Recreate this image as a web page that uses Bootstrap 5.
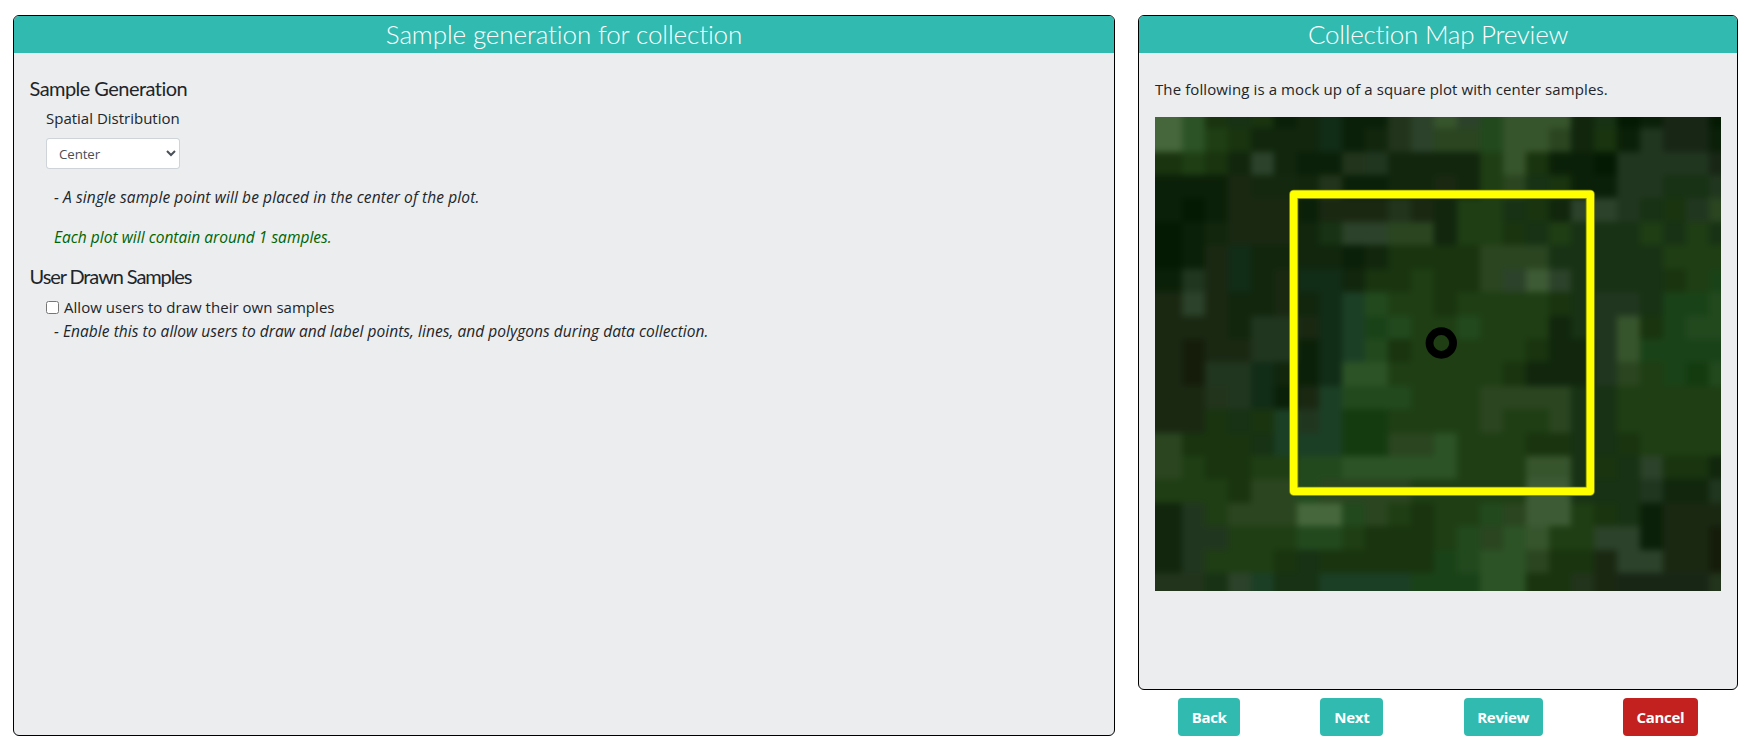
<!DOCTYPE html>
<html lang="en">
<head>
<meta charset="utf-8">
<meta name="viewport" content="width=device-width, initial-scale=1">
<title>Sample generation for collection</title>
<link href="https://cdn.jsdelivr.net/npm/bootstrap@5.3.0/dist/css/bootstrap.min.css" rel="stylesheet">
<style>
  body { font-family: "Open Sans", "Noto Sans", sans-serif; font-size: 15px; line-height: 24px; color: #212529; }
  .wizard { height: 749px; padding: 15px 13px 13px; gap: 23px; }
  .preview-col { width: 600px; }
  .panel { background: #ebedef; border: 1px solid #000; border-radius: 6px; overflow: hidden; }
  .panel-title { height: 37px; background: #31bab0; color: #fff; font: 300 26px/36px Lato, sans-serif; letter-spacing: -.12px; }
  .panel-title.tight { letter-spacing: -.25px; }
  .panel-content { padding: 24px 16px 0; }
  .section-title { font: 400 20px/24px Lato, sans-serif; letter-spacing: -.55px; margin: -1px 0 6px -.5px; }
  .section-title.tight { letter-spacing: -1.1px; margin-bottom: 7px; }
  .dist-select { width: 134px; height: 31px; appearance: auto; color: #495057; border-color: #ced4da; font-size: 13.3px; padding: 4px 8px; border-radius: 3px; letter-spacing: -.1px; }
  .hint { font-size: 15.5px; font-style: italic; letter-spacing: .08px; }
  .hint.roomy { letter-spacing: .11px; }
  .hint.snug { letter-spacing: .05px; }
  .estimate { color: #006400; letter-spacing: .02px; }
  .own-label { padding-left: 5px; letter-spacing: .03px; }
  .intro { letter-spacing: .1px; }
  .wizard-btn { height: 38px; padding: 0; border: 0; border-radius: 4px; background: #31bab0; color: #fff; font-size: 15px; font-weight: 700; letter-spacing: -.3px; }
  .wizard-btn.cancel { background: #c32020; }
</style>
</head>
<body class="bg-white overflow-hidden">
<main class="wizard d-flex">
  <section class="panel flex-grow-1">
    <h2 class="panel-title text-center mb-0">Sample generation for collection</h2>
    <div class="panel-content">
      <h3 class="section-title">Sample Generation</h3>
      <div class="ps-3">
        <label for="dist" class="d-block mb-2">Spatial Distribution</label>
        <select id="dist" class="form-control form-control-sm dist-select"><option>Center</option></select>
        <p class="hint roomy ps-2 my-3">- A single sample point will be placed in the center of the plot.</p>
        <p class="hint estimate ps-2 mb-3">Each plot will contain around 1 samples.</p>
      </div>
      <h3 class="section-title tight">User Drawn Samples</h3>
      <div class="ps-3">
        <div class="d-flex align-items-center"><input type="checkbox" id="own" class="m-0"><label for="own" class="own-label">Allow users to draw their own samples</label></div>
        <p class="hint snug ps-2 mb-0">- Enable this to allow users to draw and label points, lines, and polygons during data collection.</p>
      </div>
    </div>
  </section>
  <section class="preview-col d-flex flex-column flex-shrink-0">
    <div class="panel flex-grow-1">
      <h2 class="panel-title tight text-center mb-0">Collection Map Preview</h2>
      <div class="panel-content">
        <p class="intro mb-3">The following is a mock up of a square plot with center samples.</p>
        <svg class="d-block" width="566" height="474" viewBox="0 0 566 474" role="img" aria-label="Plot preview">
          <defs><filter id="soft" filterUnits="userSpaceOnUse" x="-20" y="-20" width="606" height="514" color-interpolation-filters="sRGB"><feGaussianBlur stdDeviation="3.4"/></filter></defs>
          <g id="imagery" filter="url(#soft)" shape-rendering="crispEdges"></g>
          <rect x="138.7" y="77.3" width="296.6" height="297" fill="none" stroke="#878f08" stroke-width="9.2" stroke-linejoin="round"/>
          <rect x="138.7" y="77.3" width="296.6" height="297" fill="none" stroke="#ff0" stroke-width="7.4" stroke-linejoin="round"/>
          <circle cx="286.3" cy="226" r="11.8" fill="none" stroke="#000" stroke-width="7.8"/>
        </svg>
      </div>
    </div>
    <div class="d-flex justify-content-around mt-2">
      <button class="btn wizard-btn" style="width:62px">Back</button>
      <button class="btn wizard-btn" style="width:63px">Next</button>
      <button class="btn wizard-btn" style="width:79px">Review</button>
      <button class="btn wizard-btn cancel" style="width:75px">Cancel</button>
    </div>
  </section>
</main>
<script src="https://cdn.jsdelivr.net/npm/bootstrap@5.3.0/dist/js/bootstrap.bundle.min.js"></script>
<script>
  // Land-cover tones, one key per imagery cell
  const tones = {0:'#051a03',1:'#0b2008',2:'#11260d',3:'#1a2812',4:'#19340f',5:'#1f3e14',6:'#1a4218',7:'#22491e',8:'#21361f',9:'#2a4520',a:'#2c5326',b:'#2c422a',c:'#37552d',d:'#3d5b35',e:'#46673b',f:'#182616',g:'#22341c',h:'#173214',i:'#112c17',j:'#143b10',k:'#1b3f25',l:'#14280f',m:'#151d0a'};
  const cells = [
    'e a 4 h 4 1 2 i 1 1 g b c b 7 c c c 2 h 0 1 f f 0',
    'e a 5 4 2 2 2 i 1 2 g b 9 9 7 c c 9 2 4 1 8 f f 1',
    '4 5 4 2 b 2 1 1 g 8 2 2 2 2 5 c 4 1 1 0 8 8 8 8 f',
    '1 1 1 3 l l 2 g 1 1 2 2 3 2 5 9 h 4 1 1 8 8 h h 8',
    '1 0 1 3 3 3 1 3 3 3 g 3 2 5 5 h 4 2 b b 8 h 4 8 9',
    '0 1 2 3 3 3 2 h b b 9 9 2 5 5 4 h 5 h h h 5 h 5 h',
    '0 1 3 i 2 2 2 2 1 2 4 4 4 4 9 9 9 h h h h h 5 5 5',
    '1 8 3 i 2 3 i i 2 4 4 5 4 4 9 b d b h h h h 4 5 6',
    '3 b 3 2 2 3 2 i k 7 5 5 4 5 5 5 5 4 h 8 8 h 6 6 7',
    '3 3 3 2 8 8 3 i k 6 7 5 5 7 5 5 5 2 h 8 c 4 6 7 7',
    '3 m 3 3 8 8 1 i k 7 4 5 5 5 5 5 4 2 2 8 c 6 6 6 6',
    '3 m 8 8 i 2 1 i a a 5 5 5 5 5 4 2 2 2 8 9 5 6 j 7',
    '3 3 g 8 i 1 3 k 7 7 7 5 5 5 9 9 9 9 h h 5 5 5 5 5',
    '3 3 4 h 4 k 8 k j j 5 5 5 5 9 5 5 9 h h 5 5 5 5 5',
    '9 4 4 4 h k k k j j 9 9 a 5 5 5 4 4 h h 4 5 5 5 5',
    '9 5 4 4 5 5 7 7 a a a a a 5 5 5 c c h 4 h b 4 4 2',
    '5 5 5 4 9 9 7 9 9 9 9 5 5 5 5 5 d d h h h 8 2 2 8',
    '2 8 5 9 9 9 e e 7 9 5 4 5 5 7 9 d d 5 4 h 1 3 3 3',
    '2 8 8 5 5 5 7 7 5 4 4 4 5 7 9 a c 5 5 b b 1 3 3 m',
    '2 8 5 5 5 4 h 4 4 4 4 4 6 7 a a 9 4 4 3 b b 3 3 m',
    'g g h b k h h k k k k 6 6 6 a a 4 4 g 3 f f f f g'
  ];
  const xs = [-14, ...Array.from({length: 24}, (_, i) => Math.round(27.1 + 22.9 * i)), 580];
  const ys = [-14, ...Array.from({length: 20}, (_, i) => Math.round(11.3 + 23.4 * i)), 488];
  document.getElementById('imagery').innerHTML = cells.map((row, r) => row.split(' ').map((k, c) =>
    `<rect x="${xs[c]}" y="${ys[r]}" width="${xs[c + 1] - xs[c]}" height="${ys[r + 1] - ys[r]}" fill="${tones[k]}"/>`
  ).join('')).join('');
</script>
</body>
</html>
